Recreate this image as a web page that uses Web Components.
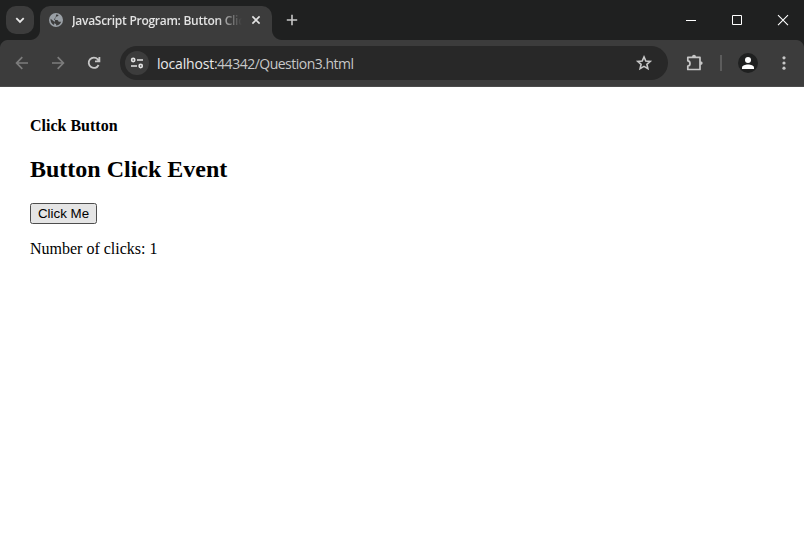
<!DOCTYPE html>
<html lang="en">
<head>
<meta charset="utf-8">
<title>JavaScript Program: Button Click Event</title>
<style>
html,body{margin:0;height:100%;overflow:hidden;background:#fff}
</style>
</head>
<body>
<browser-window>
  <tab-strip slot="chrome"><browser-tab>JavaScript Program: Button Click Event</browser-tab></tab-strip>
  <tool-bar slot="chrome"><address-bar>localhost<span style="color:#c7c7c7;letter-spacing:-.5px">:44342/Question3.html</span></address-bar></tool-bar>
  <click-page></click-page>
</browser-window>
<script>
function define(name, html, setup) {
  const t = document.createElement('template');
  t.innerHTML = html;
  customElements.define(name, class extends HTMLElement {
    constructor() {
      super();
      this.attachShadow({ mode: 'open' }).append(t.content.cloneNode(true));
      if (setup) setup(this.shadowRoot);
    }
  });
}

define('browser-window', `
<style>
:host{display:flex;flex-direction:column;height:557px;width:804px;background:#fff;color:#000}
</style>
<slot name="chrome"></slot><slot></slot>`);

define('tab-strip', `
<style>
:host{display:flex;height:40px;box-sizing:border-box;padding:6px 0 0 6px;background:#1f2020;flex:none}
.search{width:28px;height:28px;border-radius:10px;background:#3c3c3c;margin-right:6px;flex:none}
.new{margin-left:6px;flex:none}
svg{display:block}
.controls{display:flex;margin:-6px 0 0 auto}
</style>
<div class="search"><svg width="28" height="28" fill="none" stroke="#e8e8e8" stroke-width="1.8"><path d="M10.3 12.2 14 15.9 17.7 12.2"/></svg></div>
<slot></slot>
<svg class="new" width="28" height="28" fill="none" stroke="#c7c7c7" stroke-width="1.6"><path d="M8.8 14H19.2M14 8.8V19.2"/></svg>
<div class="controls">
<svg width="46" height="40" stroke="#fff" fill="none"><path d="M20 20.5H30"/></svg>
<svg width="46" height="40" stroke="#fff" fill="none"><path d="M20.5 15.5H29.5V24.5H20.5Z"/></svg>
<svg width="46" height="40" stroke="#fff" stroke-width="1.1" fill="none"><path d="M20 15.2 30 25.2M30 15.2 20 25.2"/></svg>
</div>`);

define('browser-tab', `
<style>
:host{display:flex;align-items:center;position:relative;width:232px;height:34px;box-sizing:border-box;padding:0 8px 6px 9px;background:#3c3c3c;border-radius:10px 10px 0 0;color:#e3e3e3;flex:none}
:host::before,:host::after{content:"";position:absolute;bottom:0;width:10px;height:10px}
:host::before{left:-10px;background:radial-gradient(circle at 0 0,transparent 9.5px,#3c3c3c 10.5px)}
:host::after{right:-10px;background:radial-gradient(circle at 100% 0,transparent 9.5px,#3c3c3c 10.5px)}
.title{width:170px;margin-left:9px;padding-top:2px;overflow:hidden;white-space:nowrap;font:600 12px/18px "Open Sans","Noto Sans",sans-serif;letter-spacing:-.27px;-webkit-mask-image:linear-gradient(90deg,#000 144px,transparent 170px)}
svg{flex:none}
.close{margin-left:auto}
</style>
<svg width="14" height="14" viewBox="0 0 14 14"><circle cx="7" cy="7" r="7" fill="#9aa0a6"/><path d="M7.2 1.5C8.3 1.3 9.2 1.6 9.6 2.1 9.3 3.3 8.2 3.7 7.1 3.7 7.2 5 6.4 5.5 5.3 5.6V7H8.2C9.3 7.3 9.2 8.2 9.7 8.7H12.2C11.4 10.9 9.4 12.3 7.1 12.5V10.9C5.6 10.8 5.3 9.8 5.4 8.7L1.6 5.8C1.2 8.5 2.6 11.2 5 12.1" fill="#3c3c3c"/></svg>
<div class="title"><slot></slot></div>
<svg class="close" width="16" height="16" fill="none" stroke="#e3e3e3" stroke-width="1.6"><path d="M4.4 4.4 11.6 11.6M11.6 4.4 4.4 11.6"/></svg>`);

define('tool-bar', `
<style>
:host{display:flex;align-items:center;height:47px;box-sizing:border-box;border-bottom:1px solid #4b4b4b;padding:0 6px 0 8px;flex:none;background:radial-gradient(circle at 8px 8px,#3c3c3c 7.5px,#1f2020 8.5px) 0 0/8px 8px no-repeat,radial-gradient(circle at 0 8px,#3c3c3c 7.5px,#1f2020 8.5px) 100% 0/8px 8px no-repeat,#3c3c3c}
svg{display:block;flex:none}
.left{display:flex;gap:8px;margin-right:12px}
.right{display:flex;align-items:center;margin-left:12px}
.line{width:2px;height:16px;background:#5c5c5c;margin:0 11px 0 12px}
</style>
<div class="left">
<svg width="28" height="28" fill="none" stroke="#7c7c7c" stroke-width="1.7"><path d="M20 14H9M14.3 8.2 8.6 14 14.3 19.8"/></svg>
<svg width="28" height="28" fill="none" stroke="#7c7c7c" stroke-width="1.7"><path d="M8 14H19M13.7 8.2 19.4 14 13.7 19.8"/></svg>
<svg width="28" height="28" fill="none" stroke="#c7c7c7" stroke-width="1.8"><path d="M18.6 16A5.2 5.2 0 1 1 17.8 10.3L19.4 12.1M19.4 8V12.4H15"/></svg>
</div>
<slot></slot>
<div class="right">
<svg width="28" height="28" fill="none" stroke="#c7c7c7" stroke-width="1.7" stroke-linejoin="round"><path d="M7.8 8.4H20V20.5H7.8V17C9.5 16.8 10 15.6 10 14.4S9.4 12 7.8 11.8Z"/><path d="M12 8A2 2.2 0 0 1 16 8ZM20.2 12.2A2.5 1.9 0 0 1 20.2 16Z" fill="#c7c7c7" stroke="none"/></svg>
<div class="line"></div>
<svg width="28" height="28"><circle cx="15" cy="14" r="10" fill="#1f2020"/><circle cx="15" cy="11" r="3" fill="#fff"/><path d="M9 20V18.5C9 16.4 12.3 15.4 15 15.4S21 16.4 21 18.5V20Z" fill="#fff"/></svg>
<svg width="28" height="28" style="margin-left:8px" fill="#c7c7c7"><circle cx="15" cy="8.8" r="1.6"/><circle cx="15" cy="14" r="1.6"/><circle cx="15" cy="19.2" r="1.6"/></svg>
</div>`);

define('address-bar', `
<style>
:host{display:flex;align-items:center;width:548px;height:34px;box-sizing:border-box;border-radius:17px;background:#282828;padding:0 10px 0 5px;color:#e8e8e8;font:14px/20px "Open Sans","Noto Sans",sans-serif;letter-spacing:-.19px;flex:none}
.info{width:24px;height:24px;border-radius:50%;background:#3c3c3c;margin-right:8px}
svg{display:block}
.url{padding-top:1px}
.star{margin-left:auto}
</style>
<div class="info"><svg width="24" height="24" fill="none" stroke="#e3e3e3" stroke-width="1.6"><circle cx="8.2" cy="9" r="1.6"/><path d="M12 9H18M6 15H12"/><circle cx="15.7" cy="15" r="1.6"/></svg></div>
<span class="url"><slot></slot></span>
<svg class="star" width="28" height="28" fill="none" stroke="#c7c7c7" stroke-width="1.6"><path d="M14 7.9 15.8 12 20.2 12.4 16.9 15.3 17.9 19.7 14 17.4 10.1 19.7 11.1 15.3 7.8 12.4 12.2 12Z"/></svg>`);

define('click-page', `
<style>
:host{display:block;flex:1;padding:30px;font:16px/18px "Liberation Serif",serif;color:#000}
h4{font-size:16px;line-height:18px;margin:0 0 20px}
h2{font-size:24px;line-height:28px;margin:0 0 20px}
button{display:block;box-sizing:border-box;width:67px;height:21px;padding:0;border:1px solid #4d4d4d;border-radius:2.5px;background:#e5e5e5;color:#000;font:13.333px/18px "Liberation Sans",sans-serif}
p{margin:16px 0 0}
</style>
<h4>Click Button</h4>
<h2>Button Click Event</h2>
<button type="button">Click Me</button>
<p>Number of clicks: <span>1</span></p>`, root => {
  const count = root.querySelector('span');
  root.querySelector('button').addEventListener('click', () => { count.textContent = +count.textContent + 1; });
});
</script>
</body>
</html>
